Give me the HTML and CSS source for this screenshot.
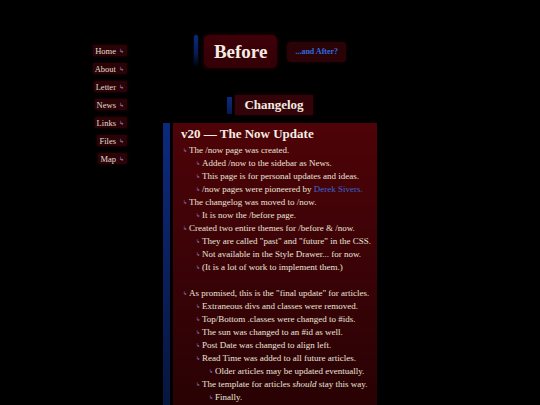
FILE: index.html
```html
<!DOCTYPE html>
<html lang="en">
<head>
<meta charset="utf-8">
<title>Before — Changelog</title>
<link rel="stylesheet" href="styles.css">
</head>
<body>
<div class="page">
  <nav class="nav">
    <a href="#">Home</a>
    <a href="#">About</a>
    <a href="#">Letter</a>
    <a href="#">News</a>
    <a href="#">Links</a>
    <a href="#">Files</a>
    <a href="#">Map</a>
  </nav>
  <main class="main">
    <header class="site-head">
      <span class="bar bar-head"></span>
      <h1 class="site-title">Before</h1>
      <a class="after" href="#">...and After?</a>
    </header>
    <div class="section-head">
      <span class="bar bar-section"></span>
      <h2 class="section-title">Changelog</h2>
    </div>
    <div class="content-row">
      <span class="bar bar-content"></span>
      <article class="entry">
        <h3 class="entry-title">v20 — The Now Update</h3>
        <ul class="log">
          <li>The /now page was created.
            <ul>
              <li>Added /now to the sidebar as News.</li>
              <li>This page is for personal updates and ideas.</li>
              <li>/now pages were pioneered by <a class="link" href="#">Derek Sivers.</a></li>
            </ul>
          </li>
          <li>The changelog was moved to /now.
            <ul>
              <li>It is now the /before page.</li>
            </ul>
          </li>
          <li>Created two entire themes for /before &amp; /now.
            <ul>
              <li>They are called "past" and "future" in the CSS.</li>
              <li>Not available in the Style Drawer... for now.</li>
              <li>(It is a lot of work to implement them.)</li>
            </ul>
          </li>
          <li class="gap">As promised, this is the "final update" for articles.
            <ul>
              <li>Extraneous divs and classes were removed.</li>
              <li>Top/Bottom .classes were changed to #ids.</li>
              <li>The sun was changed to an #id as well.</li>
              <li>Post Date was changed to align left.</li>
              <li>Read Time was added to all future articles.
                <ul>
                  <li>Older articles may be updated eventually.</li>
                </ul>
              </li>
              <li>The template for articles <em>should</em> stay this way.
                <ul>
                  <li>Finally.</li>
                </ul>
              </li>
            </ul>
          </li>
        </ul>
      </article>
    </div>
  </main>
  <div class="spacer"></div>
</div>
</body>
</html>
```

FILE: styles.css
```css
html, body {
  margin: 0;
  padding: 0;
  background: #000;
}

body {
  font-family: "Liberation Serif", "Times New Roman", serif;
  color: #ece4da;
  overflow: hidden;
}

.page {
  display: grid;
  grid-template-columns: 1fr 214px 1fr;
  min-height: 405px;
}

/* ---------- nav ---------- */
.nav {
  justify-self: end;
  margin-right: 36px;
  padding-top: 45px;
  display: flex;
  flex-direction: column;
  align-items: flex-end;
  gap: 7px;
}

.nav a {
  display: block;
  height: 11px;
  line-height: 11px;
  font-size: 8.5px;
  color: #e4dcd2;
  text-decoration: none;
  background: #2a0307;
  padding: 0 3px 0 2px;
  border-radius: 1px;
  box-shadow: 0 0 3px rgba(55, 0, 8, 0.9);
}

.nav a::after {
  content: "↳";
  font-family: "DejaVu Sans", sans-serif;
  font-size: 6px;
  color: #a48ad6;
  margin-left: 3px;
  vertical-align: 1px;
}

/* ---------- main ---------- */
.main {
  padding-top: 35px;
}

.bar {
  display: block;
  flex: none;
}

.site-head {
  display: flex;
  justify-content: center;
  align-items: center;
}

.bar-head {
  width: 4px;
  height: 30px;
  margin-right: 6px;
  align-self: flex-start;
  border-radius: 2px;
  background: linear-gradient(180deg, #0a2a7a 0%, #081c55 60%, rgba(6, 16, 50, 0.3) 100%);
  box-shadow: 0 0 3px rgba(20, 50, 140, 0.4);
}

.site-title {
  margin: 0;
  height: 33px;
  line-height: 33px;
  font-size: 19px;
  font-weight: bold;
  color: #f4ece2;
  padding: 0 10px;
  background: linear-gradient(180deg, #3e0008 0%, #330006 100%);
  border-radius: 5px;
  box-shadow: 0 0 4px rgba(80, 0, 10, 0.6);
}

.after {
  margin-left: 10px;
  height: 20px;
  line-height: 20px;
  font-size: 8px;
  font-weight: bold;
  color: #2f6ae0;
  text-decoration: none;
  padding: 0 8px;
  background: #2a0307;
  border-radius: 4px;
  box-shadow: 0 0 3px rgba(70, 0, 8, 0.6);
}

.section-head {
  margin-top: 27px;
  display: flex;
  justify-content: center;
  align-items: center;
}

.bar-section {
  width: 5px;
  height: 17px;
  margin-right: 3px;
  background: linear-gradient(180deg, #0c2a7e 0%, #081a52 100%);
}

.section-title {
  margin: 0;
  height: 20px;
  line-height: 20px;
  font-size: 13px;
  font-weight: bold;
  color: #f2eae0;
  padding: 0 9px;
  background: #32040a;
  box-shadow: 0 0 3px rgba(70, 0, 8, 0.6);
}

.content-row {
  margin-top: 8px;
  display: flex;
  gap: 3px;
}

.bar-content {
  width: 7px;
  background: linear-gradient(180deg, #0c2a7c 0px, #0a1f5e 140px, #07163c 290px);
}

.entry {
  flex: 1;
  padding: 3px 4px 40px 8px;
  background: linear-gradient(180deg, #4e0307 0px, #3c0307 130px, #280204 290px);
}

.entry-title {
  margin: 0 0 2px;
  font-size: 13px;
  line-height: 16px;
  font-weight: bold;
  color: #f4ece2;
}

.log, .log ul {
  list-style: none;
  margin: 0;
  padding: 0;
}

.log {
  padding-left: 2px;
}

.log ul {
  padding-left: 7px;
}

.log li {
  position: relative;
  font-size: 9px;
  line-height: 13px;
  padding-left: 6px;
  color: #ece4da;
  white-space: nowrap;
}

.log li::before {
  content: "↳";
  position: absolute;
  left: 0;
  top: 0;
  font-family: "DejaVu Sans", sans-serif;
  font-size: 5px;
  color: #a48ad6;
}

.log li.gap {
  margin-top: 13px;
}

.log em {
  font-style: italic;
}

.link {
  color: #3566d8;
  text-decoration: none;
}
```
